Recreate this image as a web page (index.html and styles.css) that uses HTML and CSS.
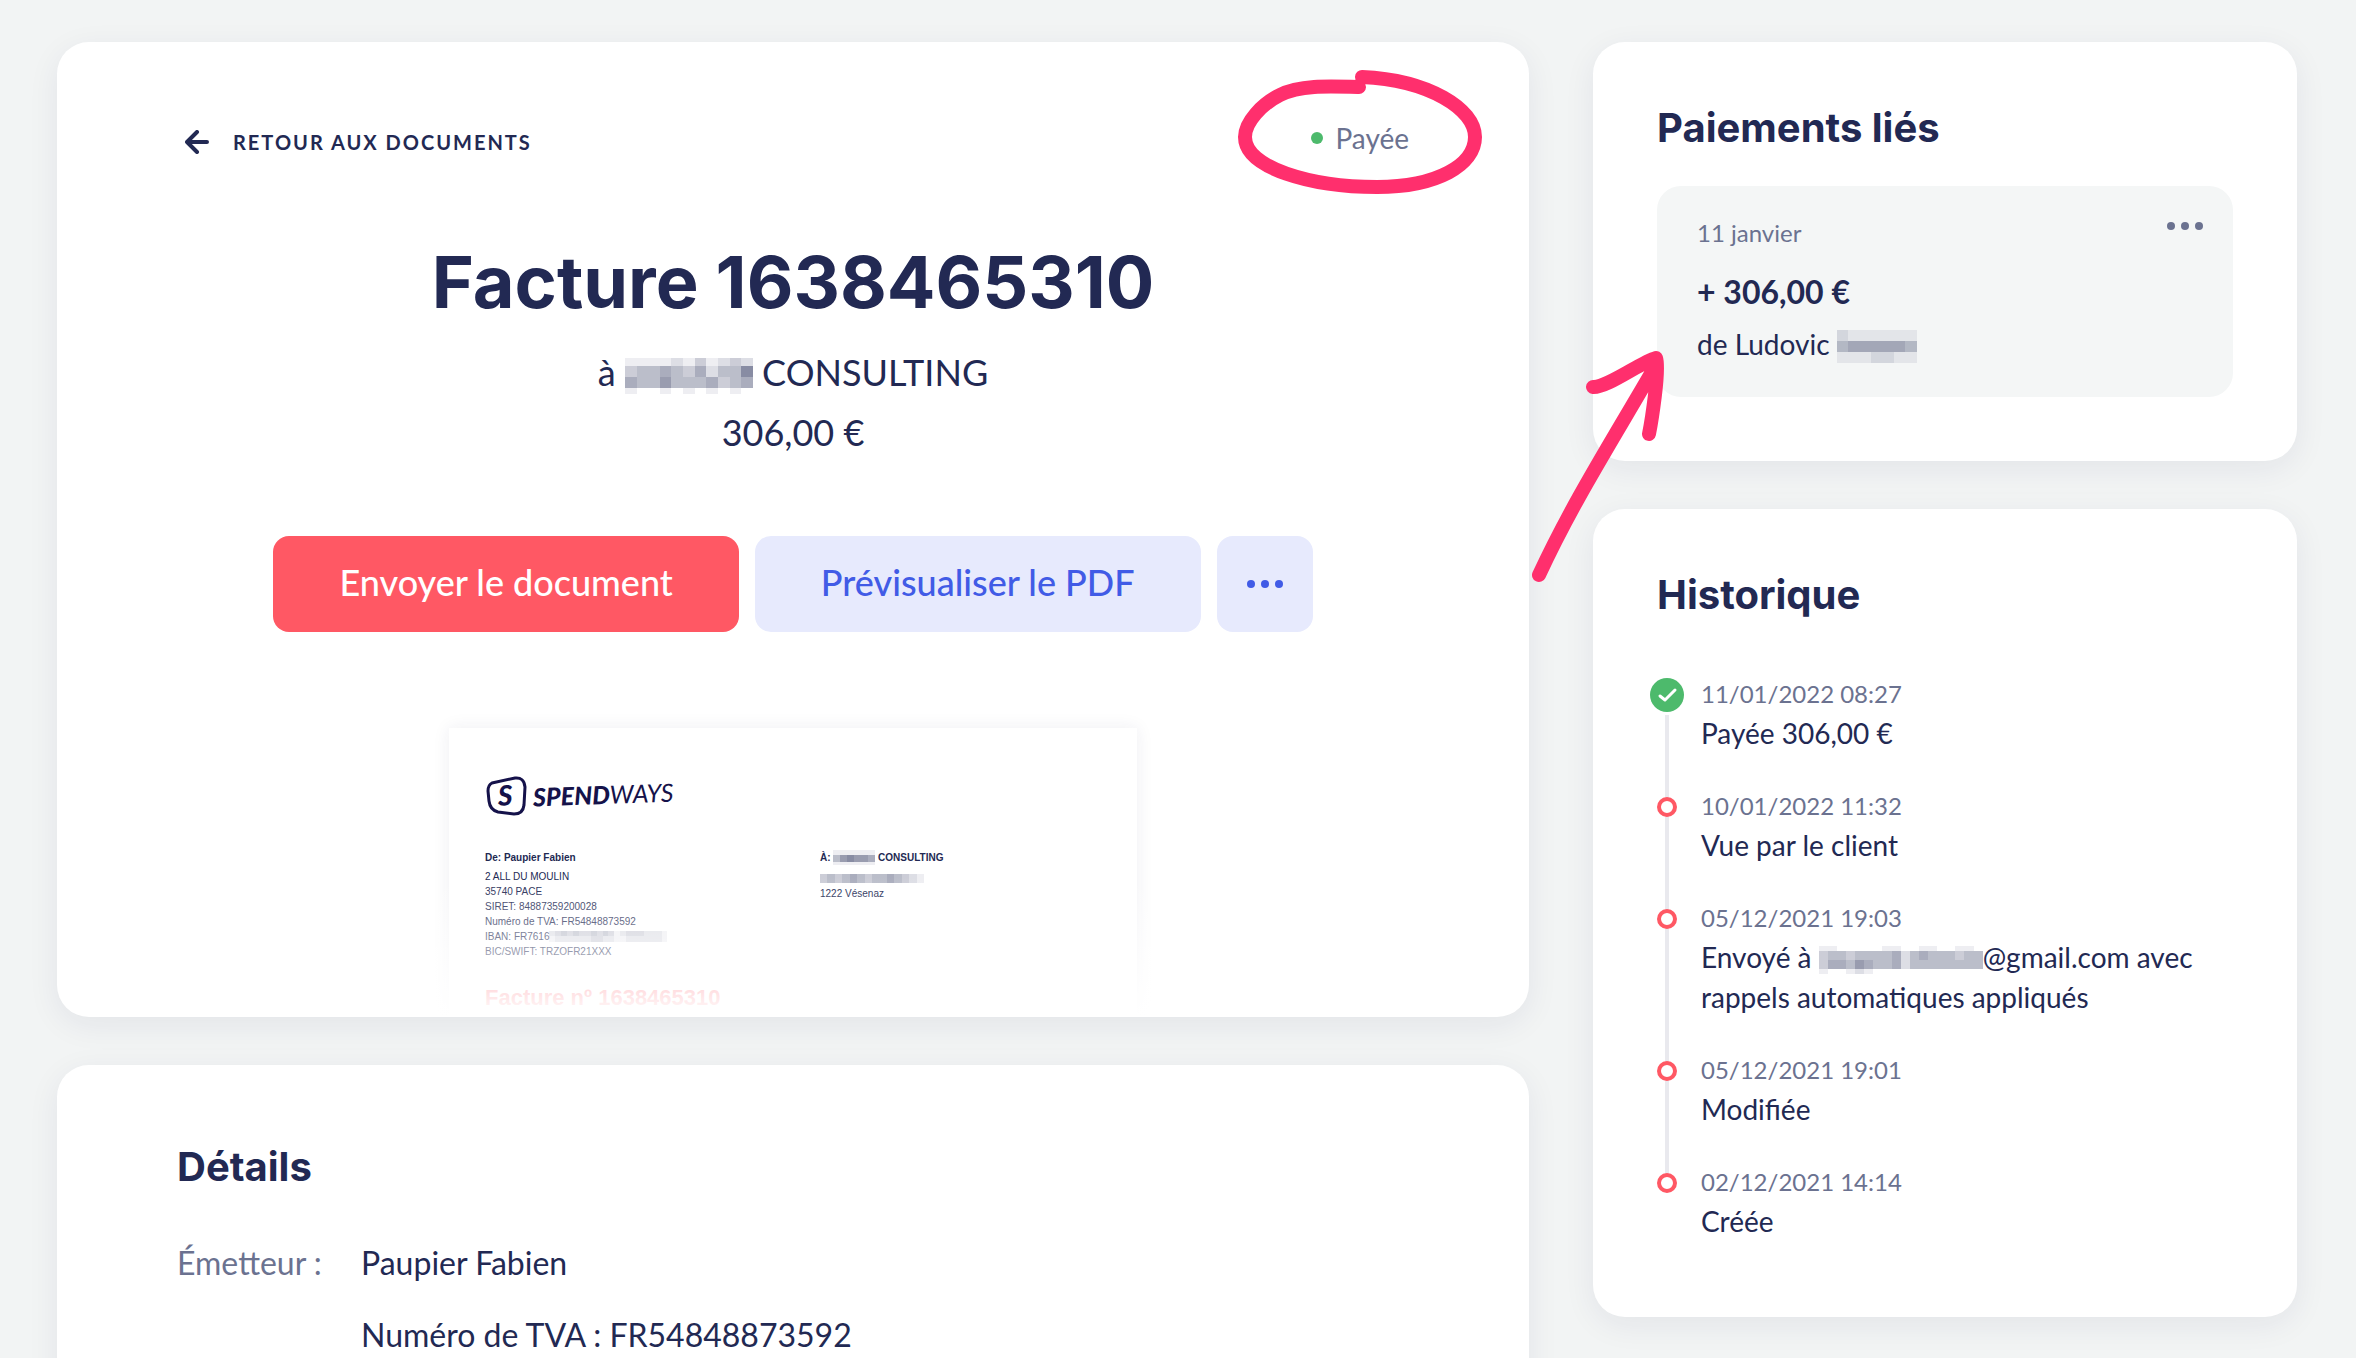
FILE: index.html
```html
<!DOCTYPE html>
<html lang="fr">
<head>
    <meta charset="UTF-8">
    <meta name="viewport" content="width=device-width, initial-scale=1.0">
    <title>Facture 1638465310</title>
    <link rel="stylesheet" href="styles.css">
</head>
<body>
    <div class="page">
        <main class="column">
            <section class="card invoice">
                <div class="invoice-top">
                    <a class="back" href="#">
                        <svg width="24" height="24" viewBox="0 0 24 24"><path d="M12 2 L2 12 L12 22 M2 12 H22"/></svg>
                        Retour aux documents
                    </a>
                    <div class="status">
                        <span class="status-dot"></span>Payée
                        <svg class="note note-circle" width="250" height="140" viewBox="0 0 250 140"><path d="M127 17 C194 20 240 49 240 77 C240 105 202 127 142 127 C76 127 10 108 10 77 C10 62 27 44 45 35 C64 25 92 26 124 27"/></svg>
                    </div>
                </div>
                <h1>Facture 1638465310</h1>
                <p class="lead">à <span class="mask mask-client" data-rows="11112131232 34454352447 54464445345 10010101010"></span> CONSULTING</p>
                <p class="lead">306,00 €</p>
                <div class="actions">
                    <button class="btn btn-primary">Envoyer le document</button>
                    <button class="btn btn-soft">Prévisualiser le PDF</button>
                    <button class="btn btn-soft btn-more" aria-label="Plus d'actions">
                        <svg width="40" height="10" viewBox="0 0 40 10"><circle cx="6" cy="5" r="4"/><circle cx="20" cy="5" r="4"/><circle cx="34" cy="5" r="4"/></svg>
                    </button>
                </div>
                <div class="preview">
                    <div class="paper">
                        <svg class="logo" width="196" height="40" viewBox="0 0 196 40">
                            <path d="M7 7 L30 2 Q39 1 40 11 L39 29 Q38 38 29 38 L13 36 Q5 34 4 25 L3 15 Q3 9 7 7 Z"/>
                            <g transform="rotate(-2 90 20)">
                                <text class="logo-mark" x="13" y="27">S</text>
                                <text class="logo-name" x="48" y="29">SPEND<tspan class="logo-thin">WAYS</tspan></text>
                            </g>
                        </svg>
                        <div class="parties">
                            <div>
                                <h3>De: Paupier Fabien</h3>
                                <p>2 ALL DU MOULIN</p>
                                <p>35740 PACE</p>
                                <p>SIRET: 84887359200028</p>
                                <p>Numéro de TVA: FR54848873592</p>
                                <p>IBAN: FR7616<span class="mask mask-iban" data-rows="23434334343123332221 12222223322112222221"></span></p>
                                <p>BIC/SWIFT: TRZOFR21XXX</p>
                            </div>
                            <div>
                                <h3>À: <span class="mask mask-name" data-rows="111111 467665 111111"></span> CONSULTING</h3>
                                <p><span class="mask mask-street" data-rows="34345434454321"></span></p>
                                <p>1222 Vésenaz</p>
                            </div>
                        </div>
                        <h2>Facture nº 1638465310</h2>
                    </div>
                </div>
            </section>

            <section class="card details">
                <h2>Détails</h2>
                <dl>
                    <dt>Émetteur :</dt>
                    <dd>Paupier Fabien</dd>
                    <dd>Numéro de TVA : FR54848873592</dd>
                </dl>
            </section>
        </main>

        <aside class="column">
            <section class="card side">
                <h2>Paiements liés</h2>
                <div class="payment">
                    <p class="date">11 janvier</p>
                    <p class="amount">+ 306,00 €</p>
                    <p class="from">de Ludovic <span class="mask mask-from" data-rows="2111111 4555554 1112211"></span></p>
                    <button class="more" aria-label="Options du paiement">
                        <svg width="40" height="10" viewBox="0 0 40 10"><circle cx="6" cy="5" r="4"/><circle cx="20" cy="5" r="4"/><circle cx="34" cy="5" r="4"/></svg>
                    </button>
                    <svg class="note note-arrow" width="140" height="240" viewBox="0 0 140 240"><path d="M12 227 C46 154 82 98 129 17 M66 39 C80 40 114 14 129 10 C133 22 124 76 122 86"/></svg>
                </div>
            </section>

            <section class="card side">
                <h2>Historique</h2>
                <ul class="timeline">
                    <li class="done">
                        <svg class="check" width="34" height="34" viewBox="0 0 34 34"><circle cx="17" cy="17" r="17"/><path d="M10 18 L15 22 L25 12"/></svg>
                        <p class="date">11/01/2022 08:27</p>
                        <p>Payée 306,00 €</p>
                    </li>
                    <li>
                        <p class="date">10/01/2022 11:32</p>
                        <p>Vue par le client</p>
                    </li>
                    <li>
                        <p class="date">05/12/2021 19:03</p>
                        <p>Envoyé à <span class="mask mask-mail" data-rows="110000011001100110 344344445245444344 355465445244444444 100121000000000000"></span>@gmail.com avec rappels automatiques appliqués</p>
                    </li>
                    <li>
                        <p class="date">05/12/2021 19:01</p>
                        <p>Modifiée</p>
                    </li>
                    <li>
                        <p class="date">02/12/2021 14:14</p>
                        <p>Créée</p>
                    </li>
                </ul>
            </section>
        </aside>
    </div>
    <script>
        // Fills each masked text with grey cells, one digit (0-9) per cell
        document.querySelectorAll('.mask').forEach(function(mask) {
            const rows = mask.dataset.rows.split(' ');
            mask.style.gridTemplateColumns = `repeat(${rows[0].length}, 1fr)`;
            rows.join('').split('').forEach(function(level) {
                const cell = document.createElement('i');
                cell.style.opacity = level / 13;
                mask.appendChild(cell);
            });
        });
    </script>
</body>
</html>
```
FILE: styles.css
```css
*, *::before, *::after {
    box-sizing: border-box;
}
body {
    margin: 0;
    background-color: #f2f4f4;
    color: #222953;
    font-family: Lato, sans-serif;
    font-size: 28px;
    line-height: 40px;
}
h1, h2, h3, p, ul, dl, dd {
    margin: 0;
    padding: 0;
}
.page {
    display: grid;
    grid-template-columns: 23fr 11fr;
    gap: 64px;
    height: 100vh;
    padding: 42px 59px 0 57px;
    overflow: hidden;
}
.column {
    display: flex;
    flex-direction: column;
    gap: 48px;
    min-width: 0;
}
.card {
    flex-shrink: 0;
    border-radius: 32px;
    background-color: #fff;
    box-shadow: 0 8px 32px rgba(34, 32, 83, 0.07);
}
.card > h2 {
    font-family: Inter, sans-serif;
    font-size: 40px;
    font-weight: 700;
    line-height: 44px;
}

/* Invoice */
.invoice {
    padding: 72px 120px 0;
    text-align: center;
}
.invoice-top {
    display: flex;
    justify-content: space-between;
    align-items: center;
}
.back {
    display: flex;
    align-items: center;
    gap: 24px;
    padding: 8px 8px 0;
    color: #222953;
    font-size: 20px;
    font-weight: 700;
    letter-spacing: 2px;
    text-decoration: none;
    text-transform: uppercase;
}
.back svg {
    fill: none;
    stroke: #222953;
    stroke-width: 4;
    stroke-linecap: round;
    stroke-linejoin: round;
}
.status {
    position: relative;
    display: flex;
    align-items: center;
    gap: 12px;
    color: #6b7290;
}
.status-dot {
    width: 12px;
    height: 12px;
    border-radius: 50%;
    background-color: #4dba6c;
}
.note {
    position: absolute;
    z-index: 2;
    fill: none;
    stroke: #ff2f6d;
    stroke-width: 14;
    stroke-linecap: round;
    stroke-linejoin: round;
    pointer-events: none;
}
.note-circle {
    top: -58px;
    right: -76px;
}
h1 {
    margin: 80px 0 20px;
    font-family: Inter, sans-serif;
    font-size: 72px;
    font-weight: 700;
    line-height: 80px;
}
.lead {
    font-size: 36px;
    line-height: 60px;
}
.actions {
    display: flex;
    justify-content: center;
    gap: 16px;
    margin-top: 74px;
}
.btn {
    height: 96px;
    padding: 0 66px 4px;
    border: none;
    border-radius: 16px;
    font-family: inherit;
    font-size: 36px;
    font-weight: 500;
    cursor: pointer;
}
.btn-primary {
    background-color: #ff5864;
    color: #fff;
}
.btn-soft {
    background-color: #e7eafd;
    color: #415be6;
}
.btn-more {
    width: 96px;
    padding: 0;
}
.btn-more svg {
    display: block;
    margin: 0 auto;
    fill: #415be6;
}

/* Document preview */
.preview {
    position: relative;
    height: 385px;
    padding-top: 96px;
    overflow: hidden;
}
.preview::after {
    content: "";
    position: absolute;
    right: 0;
    bottom: 0;
    left: 0;
    height: 140px;
    background: linear-gradient(rgba(255, 255, 255, 0), #fff);
}
.paper {
    width: 688px;
    height: 400px;
    margin: 0 auto;
    padding: 48px 36px;
    box-shadow: 0 0 16px rgba(34, 32, 83, 0.08);
    font-family: "Liberation Sans", sans-serif;
    font-size: 10px;
    line-height: 15px;
    text-align: left;
}
.logo {
    display: block;
    fill: #15124a;
    font-family: Lato, sans-serif;
    font-style: italic;
    font-weight: 900;
}
.logo path {
    fill: none;
    stroke: #15124a;
    stroke-width: 3;
}
.logo-mark {
    font-size: 28px;
}
.logo-name {
    font-size: 25px;
}
.logo-thin {
    font-weight: 400;
}
.parties {
    display: grid;
    grid-template-columns: 335px 1fr;
    margin-top: 34px;
}
.paper h3 {
    margin-bottom: 4px;
    font-size: 10px;
}
.paper h2 {
    margin-top: 25px;
    color: #ff5864;
    font-size: 22px;
    line-height: 28px;
}

/* Details */
.details {
    padding: 80px 120px;
}
.details dl {
    display: grid;
    grid-template-columns: 184px 1fr;
    row-gap: 32px;
    margin-top: 54px;
    font-size: 32px;
}
.details dt {
    color: #6b7290;
}
.details dd {
    grid-column: 2;
}

/* Side column */
.side {
    padding: 64px;
}
.date {
    color: #6b7290;
    font-size: 24px;
    line-height: 38px;
}
.payment {
    position: relative;
    margin-top: 36px;
    padding: 28px 40px 32px;
    border-radius: 24px;
    background-color: #f4f6f6;
}
.payment .amount {
    margin: 20px 0 12px;
    font-size: 32px;
    font-weight: 700;
}
.more {
    position: absolute;
    top: 25px;
    right: 28px;
    display: flex;
    padding: 10px 0;
    border: none;
    background: none;
    cursor: pointer;
}
.more svg {
    fill: #6b7290;
}
.note-arrow {
    top: 162px;
    left: -130px;
}
.timeline {
    margin-top: 58px;
    list-style: none;
}
.timeline li {
    position: relative;
    padding: 0 0 34px 44px;
}
.timeline li:last-child {
    padding-bottom: 12px;
}
.timeline li::before {
    content: "";
    position: absolute;
    z-index: 1;
    top: 10px;
    left: 0;
    width: 20px;
    height: 20px;
    border: 4px solid #ff5864;
    border-radius: 50%;
    background-color: #fff;
}
.timeline li.done::before {
    display: none;
}
.timeline li::after {
    content: "";
    position: absolute;
    top: 20px;
    bottom: -20px;
    left: 8px;
    width: 4px;
    background-color: #e9e9ee;
}
.timeline li.done::after {
    top: 40px;
}
.timeline li:last-child::after {
    display: none;
}
.check {
    position: absolute;
    top: 3px;
    left: -7px;
    fill: #4dba6c;
}
.check path {
    fill: none;
    stroke: #fff;
    stroke-width: 3;
    stroke-linecap: round;
    stroke-linejoin: round;
}

/* Masked texts */
.mask {
    display: inline-grid;
    margin-bottom: 2px;
    vertical-align: middle;
}
.mask i {
    background-color: #222953;
}
.mask-client {
    grid-template-rows: 8px 11px 11px 6px;
    width: 128px;
}
.mask-from {
    grid-template-rows: 11px 11px 11px;
    width: 80px;
}
.mask-mail {
    grid-template-rows: 5px 9px 9px 5px;
    width: 164px;
}
.mask-iban {
    width: 118px;
    height: 11px;
}
.mask-name {
    grid-template-rows: 5px 7px 3px;
    width: 42px;
}
.mask-street {
    width: 104px;
    height: 9px;
}
```
